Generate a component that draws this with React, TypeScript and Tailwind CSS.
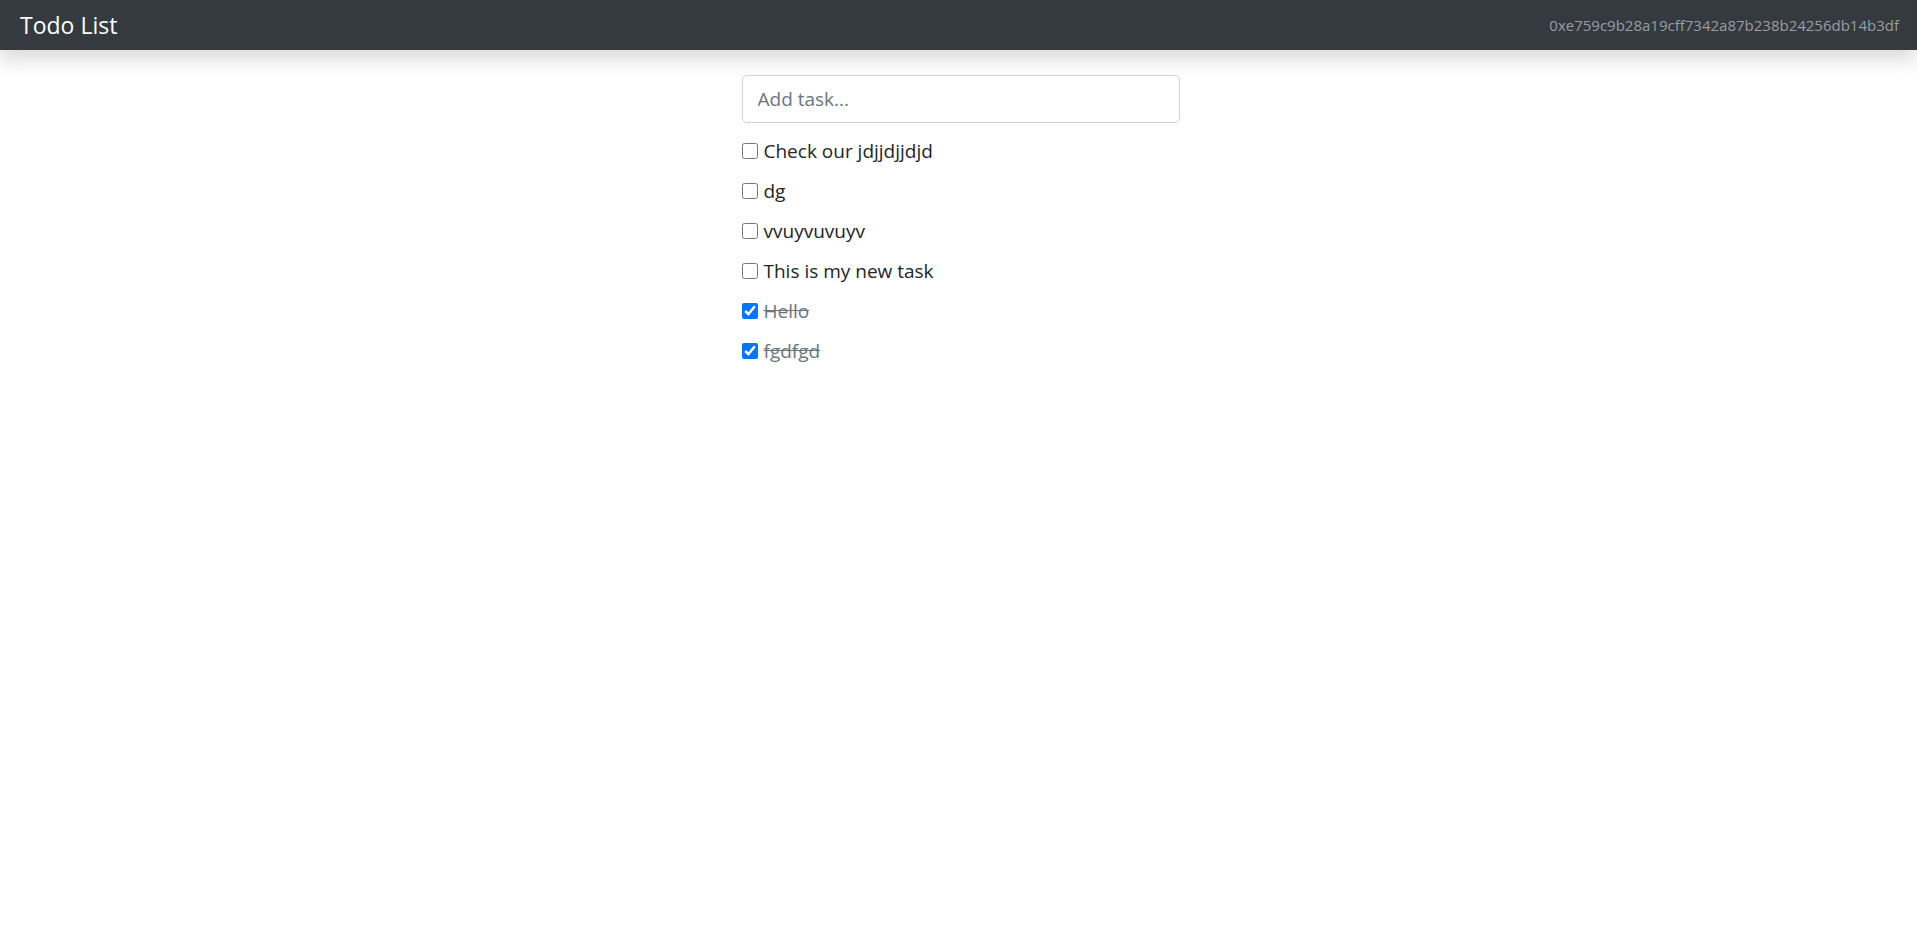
import { useState } from "react";

interface Task {
  id: number;
  content: string;
  completed: boolean;
}

const initialTasks: Task[] = [
  { id: 1, content: "Check our jdjjdjjdjd", completed: false },
  { id: 2, content: "dg", completed: false },
  { id: 3, content: "vvuyvuvuyv", completed: false },
  { id: 4, content: "This is my new task", completed: false },
  { id: 5, content: "Hello", completed: true },
  { id: 6, content: "fgdfgd", completed: true },
];

export default function App() {
  const [tasks, setTasks] = useState<Task[]>(initialTasks);
  const [newTask, setNewTask] = useState("");

  function toggleTask(id: number) {
    setTasks(tasks.map((t) => (t.id === id ? { ...t, completed: !t.completed } : t)));
  }

  function addTask(e: React.FormEvent) {
    e.preventDefault();
    if (!newTask.trim()) return;
    setTasks([...tasks, { id: tasks.length + 1, content: newTask, completed: false }]);
    setNewTask("");
  }

  return (
    <div className="min-h-screen bg-white font-['Open_Sans',sans-serif] text-[#212529]">
      <nav className="relative z-10 flex h-[50px] items-center justify-between bg-[#343a40] pl-5 pr-[18px] shadow-[0_10px_20px_rgba(0,0,0,0.15)]">
        <a href="#" className="text-[23px] leading-none text-white">
          Todo List
        </a>
        <small className="text-[15px] text-[#9a9da0]">
          0xe759c9b28a19cff7342a87b238b24256db14b3df
        </small>
      </nav>

      <main className="mx-auto w-[442px] pl-[4px] pt-[25px]">
        <form onSubmit={addTask}>
          <input
            type="text"
            value={newTask}
            onChange={(e) => setNewTask(e.target.value)}
            placeholder="Add task..."
            className="h-[48px] w-full rounded-[5px] border border-[#ced4da] px-[15px] text-[19px] outline-none placeholder:text-[#6c757d]"
          />
        </form>

        <ul className="mt-[13px] flex flex-col gap-[10px]">
          {tasks.map((task) => (
            <li key={task.id} className="flex h-[30px] items-center">
              <input
                type="checkbox"
                checked={task.completed}
                onChange={() => toggleTask(task.id)}
                className="m-0 h-4 w-4"
              />
              <span
                className={
                  task.completed
                    ? "ml-[6px] text-[19px] text-[#6c757d] line-through"
                    : "ml-[6px] text-[19px]"
                }
              >
                {task.content}
              </span>
            </li>
          ))}
        </ul>
      </main>
    </div>
  );
}
